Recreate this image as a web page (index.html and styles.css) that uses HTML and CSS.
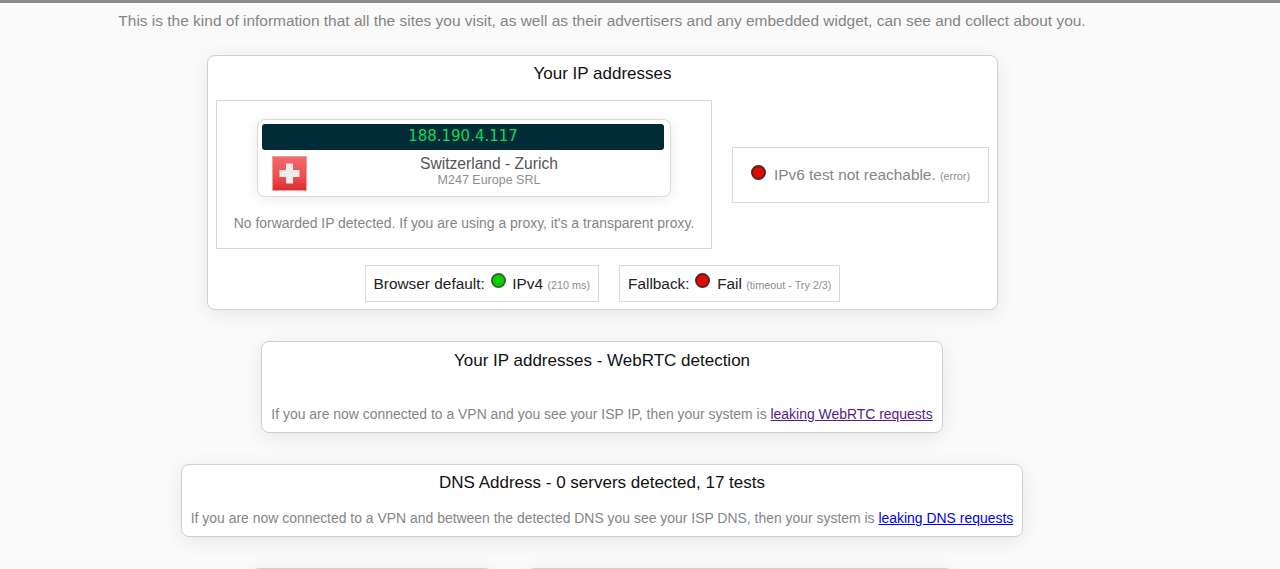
FILE: index.html
```html
<!DOCTYPE html>
<html lang="en">
<head>
<meta charset="utf-8">
<title>IP leak test</title>
<link rel="stylesheet" href="styles.css">
</head>
<body>
<main class="page">
  <p class="intro">This is the kind of information that all the sites you visit, as well as their advertisers and any embedded widget, can see and collect about you.</p>

  <section class="card card-ip">
    <h2 class="card-title">Your IP addresses</h2>
    <div class="ip-row">
      <div class="box box-v4">
        <div class="ip-card">
          <div class="ip-value">188.190.4.117</div>
          <div class="ip-info">
            <svg class="flag" viewBox="0 0 35 35" aria-hidden="true">
              <defs>
                <linearGradient id="flagfill" x1="0" y1="0" x2="0" y2="1">
                  <stop offset="0" stop-color="#f4696c"/>
                  <stop offset="0.6" stop-color="#ec4f52"/>
                  <stop offset="1" stop-color="#dd2a2c"/>
                </linearGradient>
              </defs>
              <rect x="0.5" y="0.5" width="34" height="34" fill="url(#flagfill)" stroke="#e9a09f"/>
              <path d="M14 7.500h7v6.500h6.500v7H21v6.500h-7V21H7.500v-7H14z" fill="#f1ecec"/>
            </svg>
            <div class="ip-place">
              <div class="place">Switzerland - Zurich</div>
              <div class="isp">M247 Europe SRL</div>
            </div>
          </div>
        </div>
        <p class="note">No forwarded IP detected. If you are using a proxy, it's a transparent proxy.</p>
      </div>
      <div class="box box-v6">
        <span class="dot dot-red"></span><span class="v6-text">IPv6 test not reachable.</span> <small class="tiny">(error)</small>
      </div>
    </div>
    <div class="status-row">
      <div class="box status status-default">Browser default: <span class="dot dot-green"></span> IPv4 <small class="tiny">(210 ms)</small></div>
      <div class="box status status-fallback">Fallback: <span class="dot dot-red"></span> Fail <small class="tiny">(timeout - Try 2/3)</small></div>
    </div>
  </section>

  <section class="card card-rtc">
    <h2 class="card-title">Your IP addresses - WebRTC detection</h2>
    <p class="card-note">If you are now connected to a VPN and you see your ISP IP, then your system is <a class="visited" href="#rtc">leaking WebRTC requests</a></p>
  </section>

  <section class="card card-dns">
    <h2 class="card-title">DNS Address - 0 servers detected, 17 tests</h2>
    <p class="card-note">If you are now connected to a VPN and between the detected DNS you see your ISP DNS, then your system is <a class="fresh" href="#dns">leaking DNS requests</a></p>
  </section>

  <div class="peek-row">
    <div class="card peek peek-a"></div>
    <div class="card peek peek-b"></div>
  </div>
</main>
</body>
</html>
```
FILE: styles.css
```css
* { box-sizing: border-box; }
html, body { margin: 0; height: 569px; overflow: hidden; }
body {
  background: #fafafa;
  border-top: 3px solid #8c8c8c;
  font-family: "Liberation Sans", Arial, sans-serif;
  color: #111;
}
.page {
  width: 1204px;
  display: flex;
  flex-direction: column;
  align-items: center;
}
.intro {
  margin: 9px 0 0;
  font-size: 15.480px;
  line-height: 18px;
  color: #858585;
  white-space: nowrap;
}
.card {
  background: #fff;
  border: 1px solid #cfcfcf;
  border-radius: 8px;
  box-shadow: 0 4px 20px rgba(0, 0, 0, 0.08);
}
.card-title {
  margin: 0;
  font-size: 17px;
  font-weight: 400;
  line-height: 20px;
  text-align: center;
  color: #111;
}
.box {
  background: #fff;
  border: 1px solid #d9d9d9;
}
.card-ip {
  width: 791px;
  height: 255px;
  margin-top: 25px;
  margin-left: 1px;
  padding: 8px 8px 0;
}
.ip-row {
  display: flex;
  align-items: center;
  justify-content: space-between;
  margin-top: 16px;
}
.box-v4 {
  width: 496px;
  height: 149px;
  padding-top: 18px;
  display: flex;
  flex-direction: column;
  align-items: center;
}
.ip-card {
  width: 414px;
  height: 78px;
  padding: 4px;
  background: #fff;
  border: 1px solid #d9d9d9;
  border-radius: 8px;
  box-shadow: 0 2px 14px rgba(0, 0, 0, 0.09);
}
.ip-value {
  height: 26px;
  margin-right: 2px;
  background: #022b38;
  border-radius: 3px;
  color: #10d858;
  font-family: "DejaVu Sans", sans-serif;
  font-size: 15px;
  line-height: 24px;
  text-align: center;
}
.ip-info {
  display: flex;
  margin-top: 6px;
  padding-left: 10px;
}
.flag { width: 35px; height: 35px; flex: none; }
.ip-place {
  flex: 1;
  text-align: center;
  margin-left: 5px;
  margin-top: -1px;
}
.place {
  font-size: 15.600px;
  line-height: 17px;
  color: #555;
}
.isp {
  margin-top: 1px;
  font-size: 12.500px;
  line-height: 15px;
  color: #8e8e8e;
}
.note {
  margin: 18px 0 0;
  font-size: 13.940px;
  line-height: 16px;
  color: #858585;
}
.box-v6 {
  width: 257px;
  height: 56px;
  padding-top: 17px;
  text-align: center;
  font-size: 15.400px;
  line-height: 17px;
  color: #858585;
  white-space: nowrap;
}
.v6-text { margin-left: 8px; }
.dot {
  display: inline-block;
  width: 15px;
  height: 15px;
  border-radius: 50%;
  border: 2px solid #555;
  vertical-align: 0;
}
.dot-red { background: #e00c00; border-color: #5b2320; }
.dot-green { background: #0ad000; border-color: #2c6a2a; }
.tiny {
  font-size: 10.800px;
  color: #8e8e8e;
}
.status-row {
  display: flex;
  justify-content: center;
  gap: 20px;
  margin-top: 16px;
}
.status {
  height: 37px;
  padding: 0 8px;
  font-size: 15.400px;
  line-height: 35px;
  color: #222;
  white-space: nowrap;
}
.status .dot { vertical-align: 1px; }
.status-default .dot { margin: 0 2px; }
.status-fallback .dot { margin: 0 3px 0 1px; }
.card-rtc {
  width: 682px;
  height: 92px;
  margin-top: 31px;
  padding-top: 9px;
}
.card-dns {
  width: 842px;
  height: 73px;
  margin-top: 31px;
  padding-top: 8px;
}
.card-note {
  margin: 0;
  text-align: center;
  font-size: 13.940px;
  line-height: 16px;
  color: #858585;
  white-space: nowrap;
}
.card-rtc .card-note { margin-top: 35px; }
.card-dns .card-note { margin-top: 17px; }
a { text-decoration: underline; }
.visited { color: #551a8b; }
.fresh { color: #0000ee; }
.peek-row {
  display: flex;
  gap: 34px;
  margin-top: 31px;
}
.peek { height: 60px; }
.peek-a { width: 242px; }
.peek-b { width: 426px; }
```
